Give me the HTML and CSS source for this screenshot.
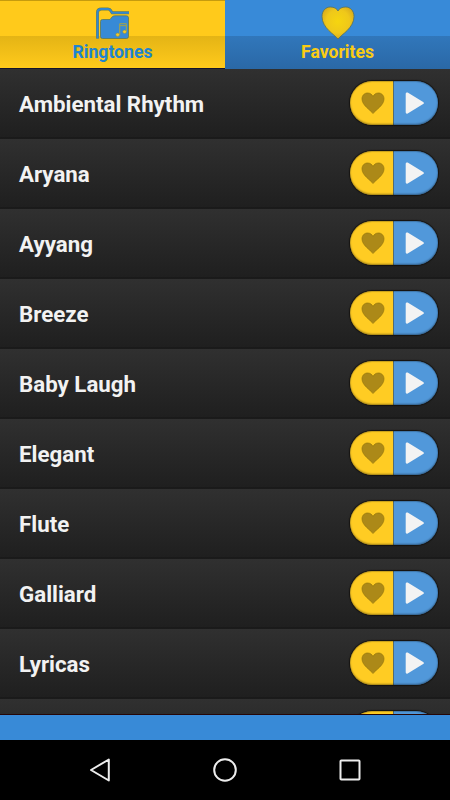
FILE: index.html
```html
<!DOCTYPE html>
<html lang="en">
<head>
<meta charset="utf-8">
<title>Ringtones</title>
<link rel="stylesheet" href="styles.css">
</head>
<body>
<svg width="0" height="0" class="defs">
  <defs>
    <radialGradient id="gold" cx=".5" cy=".45" r=".6">
      <stop offset="0" stop-color="#f6d50f"/>
      <stop offset=".6" stop-color="#efc81a"/>
      <stop offset="1" stop-color="#d3a51d"/>
    </radialGradient>
    <symbol id="heart" viewBox="0 0 24 22">
      <path d="M12 21.500C10 18.500 1 13.500 1 7C1 3.200 3.600 1 6.600 1C9.200 1 11.200 2.600 12 4.500C12.800 2.600 14.800 1 17.400 1C20.400 1 23 3.200 23 7C23 13.500 14 18.500 12 21.500Z"/>
    </symbol>
    <symbol id="play" viewBox="0 0 20 22">
      <path d="M2 1.700L17.500 11L2 20.300Z" stroke-width="2.600" stroke-linejoin="round"/>
    </symbol>
  </defs>
</svg>
<div class="app">
  <nav class="tabs">
    <div class="tab tab-active">
      <svg class="tab-icon" viewBox="0 0 36 36">
        <path d="M2.500 33.500V7.500Q2.500 4 6.500 4H13Q15 4 16 6L17.200 7.800H34" fill="none" stroke="#6f7e48" stroke-width="3"/>
        <path d="M2.500 33.500V7.500Q2.500 4 6.500 4H13Q15 4 16 6L17.200 7.800H34" fill="none" stroke="#3488cf" stroke-width="2"/>
        <path d="M5.500 16.500Q5.500 14.500 7.500 14.500H15L17 12Q18 10.800 20 10.800H31.500Q33.500 10.800 33.500 12.800V31.500Q33.500 33.500 31.500 33.500H7.500Q5.500 33.500 5.500 31.500Z" fill="#378ad6" stroke="#5d7858" stroke-width=".8"/>
        <path d="M24.700 29.500V18.700H31.300V26.500M24.700 20.700H31.300" fill="none" stroke="#a8a447" stroke-width="1"/>
        <ellipse cx="22.700" cy="29.700" rx="1.900" ry="1.700" fill="#f4c928" stroke="#8b8c45" stroke-width=".5"/>
        <ellipse cx="29.600" cy="26.800" rx="1.900" ry="1.700" fill="#f4c928" stroke="#8b8c45" stroke-width=".5"/>
      </svg>
      <span class="tab-label">Ringtones</span>
    </div>
    <div class="tab">
      <svg class="tab-icon" viewBox="0 0 36 36">
        <path d="M18 34C14.500 29.500 2 23 2 11.500C2 5.500 6 2 10.200 2C14 2 17 3.600 18 6C19 3.600 22 2 25.800 2C30 2 34 5.500 34 11.500C34 23 21.500 29.500 18 34Z" fill="url(#gold)" stroke="#57705a" stroke-width=".8"/>
      </svg>
      <span class="tab-label">Favorites</span>
    </div>
  </nav>
  <main class="list">
    <div class="row"><span class="name">Ambiental Rhythm</span><div class="pill"><span class="fav"><svg class="heart"><use href="#heart"/></svg></span><span class="play"><svg class="arrow"><use href="#play"/></svg></span></div></div>
    <div class="row"><span class="name">Aryana</span><div class="pill"><span class="fav"><svg class="heart"><use href="#heart"/></svg></span><span class="play"><svg class="arrow"><use href="#play"/></svg></span></div></div>
    <div class="row"><span class="name">Ayyang</span><div class="pill"><span class="fav"><svg class="heart"><use href="#heart"/></svg></span><span class="play"><svg class="arrow"><use href="#play"/></svg></span></div></div>
    <div class="row"><span class="name">Breeze</span><div class="pill"><span class="fav"><svg class="heart"><use href="#heart"/></svg></span><span class="play"><svg class="arrow"><use href="#play"/></svg></span></div></div>
    <div class="row"><span class="name">Baby Laugh</span><div class="pill"><span class="fav"><svg class="heart"><use href="#heart"/></svg></span><span class="play"><svg class="arrow"><use href="#play"/></svg></span></div></div>
    <div class="row"><span class="name">Elegant</span><div class="pill"><span class="fav"><svg class="heart"><use href="#heart"/></svg></span><span class="play"><svg class="arrow"><use href="#play"/></svg></span></div></div>
    <div class="row"><span class="name">Flute</span><div class="pill"><span class="fav"><svg class="heart"><use href="#heart"/></svg></span><span class="play"><svg class="arrow"><use href="#play"/></svg></span></div></div>
    <div class="row"><span class="name">Galliard</span><div class="pill"><span class="fav"><svg class="heart"><use href="#heart"/></svg></span><span class="play"><svg class="arrow"><use href="#play"/></svg></span></div></div>
    <div class="row"><span class="name">Lyricas</span><div class="pill"><span class="fav"><svg class="heart"><use href="#heart"/></svg></span><span class="play"><svg class="arrow"><use href="#play"/></svg></span></div></div>
    <div class="row"><div class="pill"><span class="fav"></span><span class="play"></span></div></div>
  </main>
  <div class="banner"></div>
  <footer class="navbar">
    <svg class="nav-icon" viewBox="0 0 26 26"><path d="M21.800 2.500V23.500L4 13Z"/></svg>
    <svg class="nav-icon" viewBox="0 0 26 26"><circle cx="13" cy="13" r="10.800"/></svg>
    <svg class="nav-icon" viewBox="0 0 26 26"><rect x="3.500" y="3.500" width="19" height="19" rx=".8"/></svg>
  </footer>
</div>
</body>
</html>
```
FILE: styles.css
```css
* { box-sizing: border-box; }
body { margin: 0; background: #000; font-family: Roboto, sans-serif; }
.defs { position: absolute; }
.app { width: 450px; height: 800px; display: flex; flex-direction: column; overflow: hidden; }

.tabs { display: flex; height: 69px; flex: none; }
.tab {
  flex: 1; display: flex; flex-direction: column; align-items: center;
  padding-top: 5px; color: #facc14;
  background: linear-gradient(#388ad8 0 36px, #3177bb 36px, #2a68a6 69px);
}
.tab-active {
  color: #1f84d0;
  background: linear-gradient(#c69b0e 0 1px, #ffca1b 1px 36px, #e4b415 36px, #ffca1b 68px, #14142a 68px);
}
.tab-icon { width: 36px; height: 36px; flex: none; }
.tab-label { margin-top: 1px; font-size: 17.6px; line-height: 21px; font-weight: 700; }

.list { flex: none; height: 646px; overflow: hidden; border-bottom: 1px solid #260607; }
.row {
  height: 70px; display: flex; align-items: flex-start; justify-content: space-between;
  padding: 12px 12px 0 19px;
  background: linear-gradient(#303030, #1f1f1f 68px, #191919 68px, #1b1b1b 70px);
}
.row:last-child { justify-content: flex-end; }
.name { margin-top: 9px; font-size: 22.3px; line-height: 28px; font-weight: 700; color: #f2f2f2; }
.pill {
  position: relative; display: flex; width: 88px; height: 44px;
  border-radius: 22px; overflow: hidden; box-shadow: 0 0 1px 1px #14120f;
}
.pill::after {
  content: ""; position: absolute; inset: 0; border-radius: 22px;
  box-shadow: inset 0 -1px 2px rgba(0, 0, 0, .4), inset 0 1px 1px rgba(0, 0, 0, .2);
}
.fav, .play { flex: none; display: flex; align-items: center; }
.fav { width: 43px; background: #ffcc23; justify-content: center; padding-left: 3px; }
.play { width: 45px; background: #5198da; border-left: 1px solid #526c70; padding-left: 10.500px; }
.heart { width: 24px; height: 22px; fill: #ac8918; stroke: #94770f; stroke-width: .7; }
.arrow { width: 20px; height: 22px; fill: #f3f3f3; stroke: #f3f3f3; }

.banner { height: 25px; flex: none; background: #388ad7; }
.navbar { flex: 1; display: flex; justify-content: space-between; align-items: center; padding: 0 87px; }
.nav-icon { width: 26px; height: 26px; fill: none; stroke: #ededed; stroke-width: 2; stroke-linejoin: round; }
```
